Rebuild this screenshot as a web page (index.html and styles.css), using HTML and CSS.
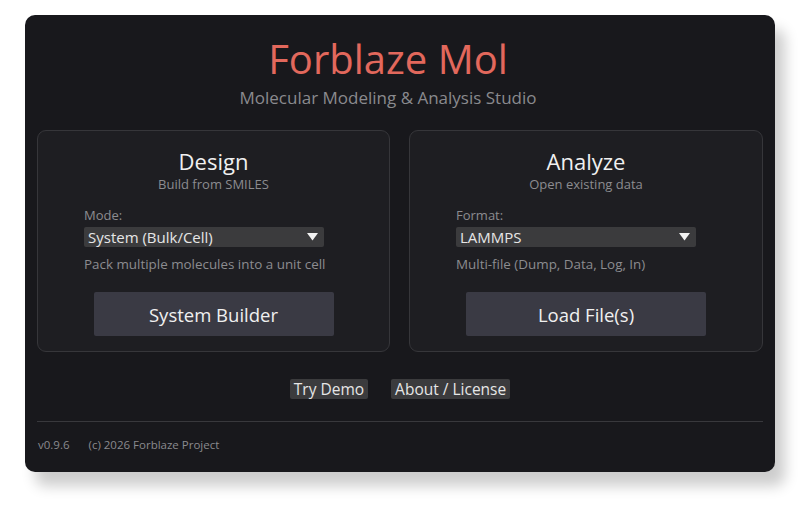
FILE: index.html
```html
<!DOCTYPE html>
<html>
<head>
<meta charset="utf-8">
<link rel="stylesheet" href="styles.css">
</head>
<body>
<div class="window">
  <header class="hero">
    <h1 class="title">Forblaze Mol</h1>
    <p class="subtitle">Molecular Modeling &amp; Analysis Studio</p>
  </header>
  <div class="cards">
    <section class="card">
      <h2 class="card-title">Design</h2>
      <p class="card-sub">Build from SMILES</p>
      <div class="form">
        <label class="label">Mode:</label>
        <div class="select"><span>System (Bulk/Cell)</span><svg class="arrow" width="11" height="8" viewBox="0 0 11 8"><path d="M0 0H11L5.5 7.5Z" fill="#f2f2f2"/></svg></div>
        <p class="hint">Pack multiple molecules into a unit cell</p>
      </div>
      <button class="btn">System Builder</button>
    </section>
    <section class="card">
      <h2 class="card-title">Analyze</h2>
      <p class="card-sub">Open existing data</p>
      <div class="form">
        <label class="label">Format:</label>
        <div class="select"><span>LAMMPS</span><svg class="arrow" width="11" height="8" viewBox="0 0 11 8"><path d="M0 0H11L5.5 7.5Z" fill="#f2f2f2"/></svg></div>
        <p class="hint">Multi-file (Dump, Data, Log, In)</p>
      </div>
      <button class="btn">Load File(s)</button>
    </section>
  </div>
  <nav class="links">
    <a class="link">Try Demo</a>
    <a class="link">About / License</a>
  </nav>
  <footer class="footer">
    <span>v0.9.6</span>
    <span>(c) 2026 Forblaze Project</span>
  </footer>
</div>
</body>
</html>
```
FILE: styles.css
```css
* { box-sizing: border-box; }
html, body { margin: 0; padding: 0; background: #ffffff; }
body {
  font-family: "Open Sans", "Noto Sans", sans-serif;
  width: 808px;
  height: 511px;
  overflow: hidden;
}
.window {
  margin: 15px 0 0 25px;
  width: 750px;
  height: 457px;
  background: #18181c;
  border-radius: 10px;
  box-shadow: 10px 14px 14px rgba(0, 0, 0, 0.2);
  padding: 0 12px;
  display: flex;
  flex-direction: column;
}
.hero {
  text-align: center;
  padding-top: 19px;
  padding-right: 24px;
}
.title {
  margin: 0;
  font-weight: 400;
  font-size: 40px;
  line-height: 50px;
  color: #e2685c;
}
.subtitle {
  margin: 2px 0 0;
  font-size: 17px;
  line-height: 24px;
  color: #8a8a8e;
}
.cards {
  margin-top: 20px;
  display: grid;
  grid-template-columns: 353px 354px;
  gap: 19px;
}
.card {
  height: 222px;
  background: #1e1e22;
  border: 1px solid #36363a;
  border-radius: 9px;
  padding-top: 15px;
  display: flex;
  flex-direction: column;
  align-items: center;
}
.card-title {
  margin: 0;
  font-weight: 400;
  font-size: 22px;
  line-height: 30px;
  color: #f0f0f0;
}
.card-sub {
  margin: 0;
  font-size: 13px;
  line-height: 16px;
  color: #8c8c90;
}
.form {
  align-self: stretch;
  padding-left: 46px;
  margin-top: 15px;
  display: flex;
  flex-direction: column;
  align-items: flex-start;
}
.label {
  font-size: 13px;
  line-height: 16px;
  color: #8c8c90;
}
.select {
  margin-top: 4px;
  width: 240px;
  height: 20px;
  background: #3b3b3d;
  border-radius: 2px;
  padding: 0 5px 0 4px;
  display: flex;
  align-items: center;
  justify-content: space-between;
  font-size: 15px;
  color: #e6e6e6;
}
.arrow { margin-right: 1px; }
.hint {
  margin: 9px 0 0;
  font-size: 13.4px;
  line-height: 16px;
  color: #8c8c90;
}
.btn {
  margin-top: 20px;
  width: 240px;
  height: 44px;
  border: none;
  border-radius: 2px;
  background: #3a3a44;
  color: #f0f0f0;
  font-family: inherit;
  font-size: 18.5px;
}
.links {
  margin-top: 27px;
  display: flex;
  justify-content: center;
  gap: 23px;
}
.link {
  background: #3b3b3d;
  color: #e6e6e6;
  font-size: 15.5px;
  line-height: 20px;
  padding: 0 4px;
  border-radius: 2px;
}
.footer {
  margin-top: 22px;
  border-top: 1px solid #38383c;
  padding-top: 15px;
  display: flex;
  gap: 19px;
  padding-left: 1px;
  font-size: 11.5px;
  line-height: 15px;
  color: #8a8a8e;
}
```
